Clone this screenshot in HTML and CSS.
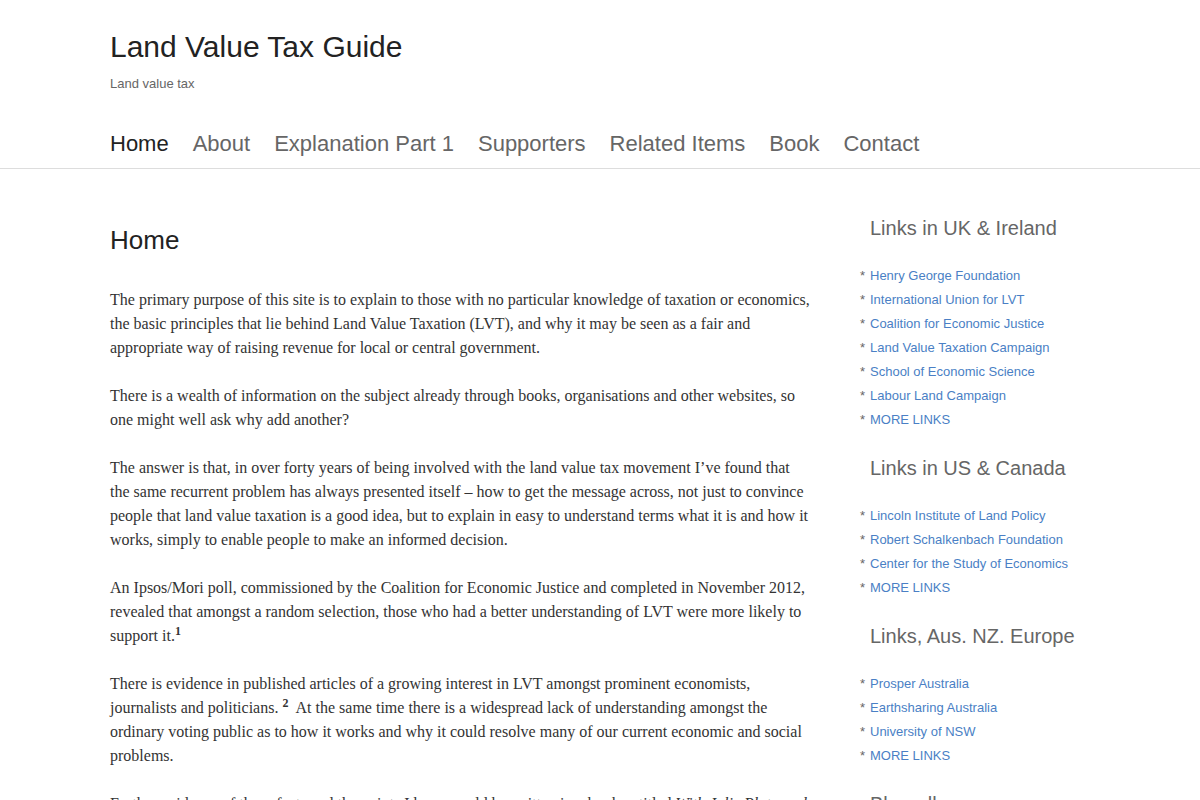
FILE: index.html
```html
<!DOCTYPE html>
<html lang="en">
  <head>
    <meta charset="UTF-8" />
    <meta name="viewport" content="width=device-width, initial-scale=1.0" />
    <title>Land Value Tax Guide</title>
    <link rel="stylesheet" href="styles.css">
  </head>
  <body>
    <header class="site-header">
      <div class="wrap">
        <h1 class="site-title">Land Value Tax Guide</h1>
        <p class="site-tagline">Land value tax</p>
        <nav class="main-nav">
          <a href="#" class="current">Home</a>
          <a href="#">About</a>
          <a href="#">Explanation Part 1</a>
          <a href="#">Supporters</a>
          <a href="#">Related Items</a>
          <a href="#">Book</a>
          <a href="#">Contact</a>
        </nav>
      </div>
    </header>

    <div class="wrap page">
      <main class="content">
        <h2 class="page-title">Home</h2>
        <p>The primary purpose of this site is to explain to those with no particular knowledge of taxation or economics, the basic principles that lie behind Land Value Taxation (LVT), and why it may be seen as a fair and appropriate way of raising revenue for local or central government.</p>
        <p>There is a wealth of information on the subject already through books, organisations and other websites, so one might well ask why add another?</p>
        <p>The answer is that, in over forty years of being involved with the land value tax movement I&rsquo;ve found that the same recurrent problem has always presented itself &ndash; how to get the message across, not just to convince people that land value taxation is a good idea, but to explain in easy to understand terms what it is and how it works, simply to enable people to make an informed decision.</p>
        <p>An Ipsos/Mori poll, commissioned by the Coalition for Economic Justice and completed in November 2012, revealed that amongst a random selection, those who had a better understanding of LVT were more likely to support it.<sup>1</sup></p>
        <p>There is evidence in published articles of a growing interest in LVT amongst prominent economists, journalists and politicians. <sup>2</sup>&nbsp; At the same time there is a widespread lack of understanding amongst the ordinary voting public as to how it works and why it could resolve many of our current economic and social problems.</p>
        <p>Further evidence of these facts and the points I have would be written in a book entitled <em>With Julie Plato and</em> the others, and published here.</p>
      </main>

      <aside class="sidebar">
        <section class="widget">
          <h3>Links in UK &amp; Ireland</h3>
          <ul>
            <li><a href="#">Henry George Foundation</a></li>
            <li><a href="#">International Union for LVT</a></li>
            <li><a href="#">Coalition for Economic Justice</a></li>
            <li><a href="#">Land Value Taxation Campaign</a></li>
            <li><a href="#">School of Economic Science</a></li>
            <li><a href="#">Labour Land Campaign</a></li>
            <li><a href="#">MORE LINKS</a></li>
          </ul>
        </section>
        <section class="widget">
          <h3>Links in US &amp; Canada</h3>
          <ul>
            <li><a href="#">Lincoln Institute of Land Policy</a></li>
            <li><a href="#">Robert Schalkenbach Foundation</a></li>
            <li><a href="#">Center for the Study of Economics</a></li>
            <li><a href="#">MORE LINKS</a></li>
          </ul>
        </section>
        <section class="widget">
          <h3>Links, Aus. NZ. Europe</h3>
          <ul>
            <li><a href="#">Prosper Australia</a></li>
            <li><a href="#">Earthsharing Australia</a></li>
            <li><a href="#">University of NSW</a></li>
            <li><a href="#">MORE LINKS</a></li>
          </ul>
        </section>
        <section class="widget">
          <h3>Blogroll</h3>
        </section>
      </aside>
    </div>
  </body>
</html>
```

FILE: styles.css
```css
body {
  margin: 0;
  background: #fff;
  color: #333;
  font-family: "Liberation Sans", Arial, sans-serif;
}

.wrap {
  width: 980px;
  margin: 0 auto;
}

.site-header {
  border-bottom: 1px solid #ddd;
}

.site-title {
  margin: 0;
  padding-top: 29px;
  font-size: 30px;
  font-weight: normal;
  line-height: 36px;
  color: #222;
}

.site-tagline {
  margin: 9px 0 0;
  font-size: 13px;
  line-height: 20px;
  color: #666;
}

.main-nav {
  display: flex;
  gap: 24px;
  margin-top: 35px;
  padding-bottom: 9px;
}

.main-nav a {
  font-size: 22px;
  line-height: 30px;
  color: #666;
  text-decoration: none;
}

.main-nav a.current {
  color: #222;
}

.page {
  display: flex;
  gap: 50px;
}

.content {
  width: 700px;
  padding-top: 54px;
}

.page-title {
  margin: 0 0 31px;
  font-size: 26px;
  font-weight: normal;
  line-height: 34px;
  color: #222;
}

.content p {
  margin: 0 0 24px;
  font-family: "Liberation Serif", "Times New Roman", serif;
  font-size: 16px;
  line-height: 24px;
  color: #333;
}

.content sup {
  font-size: 12px;
  font-weight: bold;
  line-height: 0;
}

.sidebar {
  width: 230px;
  padding-top: 44px;
}

.widget h3 {
  margin: 0 0 21px 10px;
  font-size: 20px;
  font-weight: normal;
  line-height: 30px;
  color: #666;
}

.widget ul {
  list-style: none;
  margin: 0 0 21px;
  padding: 0;
}

.widget li {
  font-size: 13px;
  line-height: 24px;
  color: #666;
}

.widget li::before {
  content: "*";
  display: inline-block;
  width: 10px;
}

.widget a {
  color: #4a7fc5;
  text-decoration: none;
}
```
